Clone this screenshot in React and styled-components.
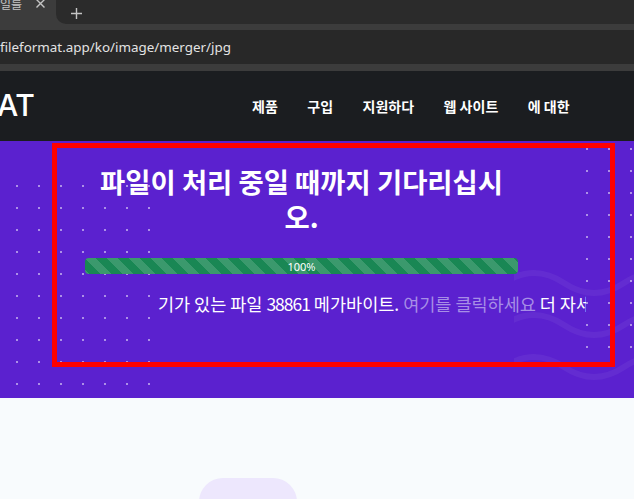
import styled, { createGlobalStyle } from "styled-components";

const GlobalStyle = createGlobalStyle`
  html, body {
    margin: 0;
    padding: 0;
  }
  body {
    background: #f8fbfd;
    font-family: "Noto Sans CJK KR", "Noto Sans", sans-serif;
    overflow: hidden;
  }
`;

const Page = styled.div`
  position: relative;
  width: 634px;
  height: 499px;
  overflow: hidden;
`;

/* browser chrome */
const TabStrip = styled.div`
  display: flex;
  height: 24px;
  background: #3c3c3c;
  overflow: hidden;
`;
const ActiveTab = styled.div`
  width: 56px;
  display: flex;
  justify-content: space-between;
  align-items: flex-start;
  padding-right: 11px;
  box-sizing: border-box;
  color: #c4c4c4;
  font-size: 12px;
  line-height: 10px;
`;
const TabTitle = styled.span`
  margin-top: -1px;
`;
const TabRest = styled.div`
  flex: 1;
  background: #2b2b2b;
  border-bottom-left-radius: 10px;
  padding-left: 15px;
  color: #c4c4c4;
`;
const Toolbar = styled.div`
  background: #3c3c3c;
  padding: 6px 0 7px;
`;
const Omnibox = styled.div`
  height: 34px;
  background: #282828;
  display: flex;
  align-items: center;
  color: #e3e3e3;
  font-family: "Noto Sans", sans-serif;
  font-size: 13.4px;
`;

/* site header */
const Header = styled.header`
  height: 70px;
  background: #1b1d20;
  display: flex;
  align-items: center;
`;
const Logo = styled.div`
  flex: 0 0 255px;
  color: #fff;
  font-family: "Inter", sans-serif;
  font-size: 30px;
  font-weight: 500;
  margin-left: -3px;
  margin-top: -2px;
  letter-spacing: -0.5px;
`;
const Nav = styled.nav`
  display: flex;
  gap: 29.5px;
  color: #fff;
  font-size: 14px;
  font-weight: 700;
`;

/* purple hero */
const Hero = styled.section`
  position: relative;
  height: 257px;
  box-sizing: border-box;
  padding-top: 23px;
  background: #5b21cf;
  color: #fff;
  overflow: hidden;

  &::before,
  &::after {
    content: "";
    position: absolute;
    height: 220px;
    background-image: radial-gradient(
      circle at 11px 11px,
      rgba(255, 255, 255, 0.5) 0.9px,
      transparent 1.3px
    );
    background-size: 22px 22px;
  }
  &::before {
    left: 6px;
    top: 34px;
    width: 154px;
  }
  &::after {
    left: 576px;
    top: -3px;
    width: 66px;
  }
`;
const Waves = styled.svg`
  position: absolute;
  right: 0;
  top: 114px;
`;
const Column = styled.div`
  position: relative;
  z-index: 1;
  width: 433px;
  margin-left: 85px;
`;
const Title = styled.h1`
  margin: 0;
  padding: 0 6px;
  font-size: 27.4px;
  line-height: 35px;
  font-weight: 700;
  text-align: center;
`;
const ProgressTrack = styled.div`
  margin-top: 24px;
  height: 16px;
  display: flex;
  border-radius: 4px;
  background: #e9ecef;
  overflow: hidden;
`;
const ProgressFill = styled.div`
  width: ${(props) => props.$percent}%;
  display: flex;
  align-items: center;
  justify-content: center;
  background-color: #198754;
  background-image: linear-gradient(
    45deg,
    rgba(255, 255, 255, 0.15) 25%,
    transparent 25%,
    transparent 50%,
    rgba(255, 255, 255, 0.15) 50%,
    rgba(255, 255, 255, 0.15) 75%,
    transparent 75%,
    transparent
  );
  background-size: 22px 22px;
  color: #fff;
  font-family: "Noto Sans", sans-serif;
  font-size: 11px;
`;
const InfoLine = styled.p`
  position: relative;
  z-index: 1;
  width: 428px;
  margin: 17px 0 0 158px;
  overflow: hidden;
  white-space: nowrap;
  font-size: 17.5px;
  line-height: 26px;
`;
const Num = styled.span`
  letter-spacing: -1px;
`;
const InfoLink = styled.span`
  color: #a78ee6;
`;

/* below */
const Lower = styled.section`
  height: 101px;
  box-sizing: border-box;
  padding: 80px 0 0 199px;
  background: #f8fbfd;
`;
const Pill = styled.div`
  width: 98px;
  height: 40px;
  border-radius: 24px 24px 0 0;
  background: #ede7fd;
`;

/* screenshot annotation */
const Marker = styled.div`
  position: absolute;
  left: 52px;
  top: 143px;
  width: 563px;
  height: 224px;
  box-sizing: border-box;
  border: 5px solid #ff0000;
  pointer-events: none;
`;

const navItems = ["제품", "구입", "지원하다", "웹 사이트", "에 대한"];

function App() {
  return (
    <>
      <GlobalStyle />
      <Page>
        <TabStrip>
          <ActiveTab>
            <TabTitle>일를</TabTitle>
            <svg width="9" height="9" viewBox="0 0 9 9" style={{ marginTop: -1 }}>
              <path d="M0.5 0.5 L8.5 8.5 M8.5 0.5 L0.5 8.5" stroke="#c4c4c4" strokeWidth="1.4" />
            </svg>
          </ActiveTab>
          <TabRest>
            <svg width="11" height="11" viewBox="0 0 11 11" style={{ marginTop: -3 }}>
              <path d="M5.5 0 V11 M0 5.5 H11" stroke="#c4c4c4" strokeWidth="1.4" />
            </svg>
          </TabRest>
        </TabStrip>
        <Toolbar>
          <Omnibox>fileformat.app/ko/image/merger/jpg</Omnibox>
        </Toolbar>

        <Header>
          <Logo>AT</Logo>
          <Nav>
            {navItems.map((item) => (
              <span key={item}>{item}</span>
            ))}
          </Nav>
        </Header>

        <Hero>
          <Waves width="120" height="140" viewBox="0 0 120 140">
            <g fill="none" stroke="rgba(255,255,255,0.05)" strokeWidth="6">
              <path d="M-10 28 q 30 -20 60 0 t 60 0 t 60 0" />
              <path d="M-10 70 q 30 -20 60 0 t 60 0 t 60 0" />
              <path d="M-10 112 q 30 -20 60 0 t 60 0 t 60 0" />
            </g>
          </Waves>
          <Column>
            <Title>파일이 처리 중일 때까지 기다리십시오.</Title>
            <ProgressTrack>
              <ProgressFill $percent={100}>100%</ProgressFill>
            </ProgressTrack>
          </Column>
          <InfoLine>
            기가 있는 파일 <Num>38861</Num> 메가바이트. <InfoLink>여기를 클릭하세요</InfoLink> 더 자세히 알아보기
          </InfoLine>
        </Hero>

        <Lower>
          <Pill />
        </Lower>

        <Marker />
      </Page>
    </>
  );
}

export default App;
